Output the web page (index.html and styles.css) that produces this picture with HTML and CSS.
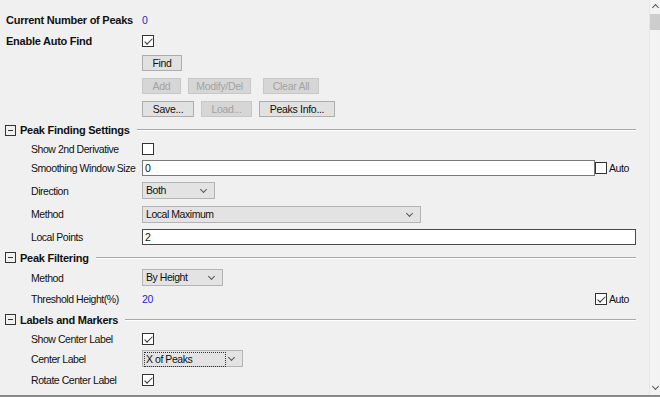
FILE: index.html
```html
<!DOCTYPE html>
<html lang="en">
<head>
    <meta charset="UTF-8">
    <meta name="viewport" content="width=device-width, initial-scale=1.0">
    <title>Peak Finding</title>
    <link rel="stylesheet" href="styles.css">
</head>
<body>
    <div class="panel">
        <div class="content">
            <div class="row top h21">
                <span class="label bold">Current Number of Peaks</span>
                <span class="value">0</span>
            </div>
            <div class="row top h22">
                <span class="label bold">Enable Auto Find</span>
                <span class="check on"></span>
            </div>
            <div class="row top h22">
                <span></span>
                <div class="btns"><button class="btn w40">Find</button></div>
            </div>
            <div class="row top h24">
                <span></span>
                <div class="btns">
                    <button class="btn w39" disabled>Add</button>
                    <button class="btn w63" disabled>Modify/Del</button>
                    <button class="btn w56" disabled>Clear All</button>
                </div>
            </div>
            <div class="row top h22">
                <span></span>
                <div class="btns">
                    <button class="btn w52">Save...</button>
                    <button class="btn w51" disabled>Load...</button>
                    <button class="btn w76">Peaks Info...</button>
                </div>
            </div>

            <div class="section h20">
                <span class="minus"></span>
                <span class="bold">Peak Finding Settings</span>
                <span class="rule"></span>
            </div>
            <div class="row sub h17">
                <span class="label">Show 2nd Derivative</span>
                <span class="check"></span>
            </div>
            <div class="row sub h22">
                <span class="label">Smoothing Window Size</span>
                <div class="with-auto">
                    <span class="input light">0</span>
                    <span class="check"></span>
                    <span class="auto">Auto</span>
                </div>
            </div>
            <div class="row sub h23">
                <span class="label">Direction</span>
                <span class="select w73">Both</span>
            </div>
            <div class="row sub h24">
                <span class="label">Method</span>
                <span class="select w279">Local Maximum</span>
            </div>
            <div class="row sub h22">
                <span class="label">Local Points</span>
                <span class="input">2</span>
            </div>

            <div class="section h19">
                <span class="minus"></span>
                <span class="bold">Peak Filtering</span>
                <span class="rule"></span>
            </div>
            <div class="row sub h21">
                <span class="label">Method</span>
                <span class="select w81">By Height</span>
            </div>
            <div class="row sub h21">
                <span class="label">Threshold Height(%)</span>
                <div class="with-auto">
                    <span class="value grow">20</span>
                    <span class="check on"></span>
                    <span class="auto">Auto</span>
                </div>
            </div>

            <div class="section h21">
                <span class="minus"></span>
                <span class="bold">Labels and Markers</span>
                <span class="rule"></span>
            </div>
            <div class="row sub h18">
                <span class="label">Show Center Label</span>
                <span class="check on"></span>
            </div>
            <div class="row sub h21">
                <span class="label">Center Label</span>
                <span class="select w101 focus"><span class="focus-box">X of Peaks</span></span>
            </div>
            <div class="row sub h22">
                <span class="label">Rotate Center Label</span>
                <span class="check on"></span>
            </div>
        </div>
        <div class="scrollbar">
            <span class="arrow up"></span>
            <span class="thumb"></span>
            <span class="arrow down"></span>
        </div>
    </div>
</body>
</html>
```

FILE: styles.css
```css
body {
    margin: 0;
    background-color: #f0f0f0;
    font-family: "Liberation Sans", Arial, sans-serif;
    font-size: 10.5px;
    letter-spacing: -0.45px;
    color: #111;
}

.panel {
    display: flex;
    height: 395px;
    border-bottom: 2px solid #8a8a8a;
}

.content {
    flex: 1;
    padding: 9px 13px 0 0;
    overflow: hidden;
}

.bold {
    font-size: 11px;
    font-weight: bold;
    letter-spacing: -0.25px;
}

.row {
    display: grid;
    align-items: center;
}

.row.top {
    grid-template-columns: 136px 1fr;
    padding-left: 6px;
}

.row.sub {
    grid-template-columns: 111px 1fr;
    padding-left: 31px;
}

.h17 { height: 17px; }
.h18 { height: 18px; }
.h19 { height: 19px; }
.h20 { height: 20px; }
.h21 { height: 21px; }
.h22 { height: 22px; }
.h23 { height: 23px; }
.h24 { height: 24px; }

.label {
    white-space: nowrap;
}

.value {
    color: #2424d8;
}

.grow {
    flex: 1;
}

/* buttons */
.btns {
    display: flex;
    gap: 7px;
}

.btn {
    height: 16px;
    padding: 0;
    font-family: inherit;
    font-size: 10.5px;
    letter-spacing: -0.3px;
    line-height: 13px;
    color: #111;
    background-color: #e1e1e1;
    border: 1px solid #adadad;
}

.btn:disabled {
    color: #a3a3a3;
    background-color: #d6d6d6;
    border-color: #c8c8c8;
}

.w39 { width: 39px; }
.w40 { width: 40px; }
.w51 { width: 51px; }
.w52 { width: 52px; }
.w56 { width: 56px; }
.w63 { width: 63px; margin-right: 5px; }
.w76 { width: 76px; }

/* checkbox */
.check {
    width: 12px;
    height: 12px;
    box-sizing: border-box;
    border: 1px solid #333;
    background-color: #fff;
    position: relative;
}

.check.on::after {
    content: "";
    position: absolute;
    left: 1px;
    top: 1px;
    width: 7px;
    height: 3px;
    border-left: 1px solid #333;
    border-bottom: 1px solid #333;
    transform: translate(0.5px, 1.5px) rotate(-45deg);
}

/* text inputs */
.input {
    display: block;
    height: 16px;
    box-sizing: border-box;
    border: 1px solid #4a4a4a;
    background-color: #fff;
    padding: 0 2px;
    line-height: 14px;
}

.input.light {
    border-color: #7a7a7a;
    flex: 1;
}

.with-auto {
    display: flex;
    align-items: center;
}

.with-auto .auto {
    width: 27px;
    margin-left: 2px;
}

/* dropdowns */
.select {
    display: block;
    height: 17px;
    box-sizing: border-box;
    border: 1px solid #b4b4b4;
    background-color: #e3e3e3;
    padding: 0 3px;
    line-height: 15px;
    position: relative;
}

.select::after {
    content: "";
    position: absolute;
    right: 8px;
    top: 4px;
    width: 4px;
    height: 4px;
    border-right: 1px solid #555;
    border-bottom: 1px solid #555;
    transform: rotate(45deg);
}

.w73 { width: 73px; }
.w81 { width: 81px; }
.w101 { width: 101px; }
.w279 { width: 279px; }

.select.focus {
    padding: 1px;
}

.focus-box {
    display: block;
    width: 79px;
    height: 13px;
    border: 1px dotted #333;
    padding-left: 1px;
    line-height: 13px;
}

/* collapsible section header */
.section {
    display: flex;
    align-items: center;
    gap: 4px;
    padding-left: 5px;
}

.minus {
    width: 11px;
    height: 11px;
    box-sizing: border-box;
    border: 1px solid #333;
    position: relative;
}

.minus::after {
    content: "";
    position: absolute;
    left: 2px;
    top: 4px;
    width: 5px;
    height: 1px;
    background-color: #333;
}

.rule {
    flex: 1;
    height: 0;
    margin-left: 3px;
    border-top: 1px solid #a8a8a8;
    border-bottom: 1px solid #fff;
}

/* scrollbar */
.scrollbar {
    width: 10px;
    border-left: 1px solid #e6e6e6;
    background-color: #f3f3f3;
    position: relative;
}

.thumb {
    position: absolute;
    left: 0;
    right: 0;
    top: 14px;
    height: 16px;
    background-color: #cdcdcd;
}

.arrow {
    position: absolute;
    left: 3px;
    width: 4px;
    height: 4px;
    border-left: 1px solid #555;
    border-top: 1px solid #555;
}

.arrow.up {
    top: 5px;
    transform: rotate(45deg);
}

.arrow.down {
    bottom: 6px;
    transform: rotate(225deg);
}
```
